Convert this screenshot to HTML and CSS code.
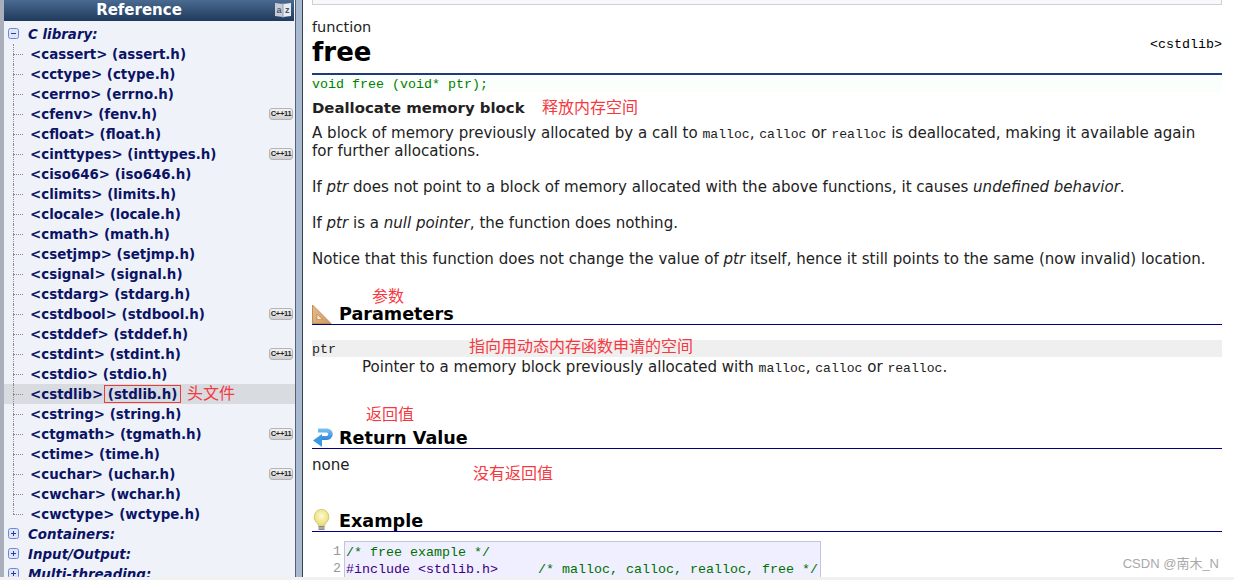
FILE: index.html
```html
<!DOCTYPE html>
<html lang="en">
<head>
  <meta charset="UTF-8">
  <title>free - C++ Reference</title>
  <link rel="stylesheet" href="styles.css">
</head>
<body>
  <div class="page">
    <aside class="sidebar">
      <div class="side-title">
        <span>Reference</span>
        <svg class="az-icon" width="16" height="16" viewBox="0 0 16 16">
          <path d="M0 1l8 1v13l-8-1z" fill="#c6ccd6"/>
          <path d="M16 1l-8 1v13l8-1z" fill="#e9ecf0"/>
          <path d="M8 1v15" stroke="#8f9cb0" stroke-width="1"/>
          <text x="1.500" y="11" class="az-text">a</text>
          <text x="10" y="11" class="az-text">z</text>
        </svg>
      </div>
      <ul class="tree tree-first">
        <li class="group"><svg class="toggle" viewBox="0 0 11 11"><rect x=".5" y=".5" width="10" height="10" rx="2" fill="#dfe6fb" stroke="#6f86d8"/><path d="M3 5.500h5" stroke="#2a3f9a"/></svg><em>C library:</em></li>
      </ul>
      <ul class="tree headers">
        <li>&lt;cassert&gt; (assert.h)</li>
        <li>&lt;cctype&gt; (ctype.h)</li>
        <li>&lt;cerrno&gt; (errno.h)</li>
        <li>&lt;cfenv&gt; (fenv.h)<span class="badge">C++11</span></li>
        <li>&lt;cfloat&gt; (float.h)</li>
        <li>&lt;cinttypes&gt; (inttypes.h)<span class="badge">C++11</span></li>
        <li>&lt;ciso646&gt; (iso646.h)</li>
        <li>&lt;climits&gt; (limits.h)</li>
        <li>&lt;clocale&gt; (locale.h)</li>
        <li>&lt;cmath&gt; (math.h)</li>
        <li>&lt;csetjmp&gt; (setjmp.h)</li>
        <li>&lt;csignal&gt; (signal.h)</li>
        <li>&lt;cstdarg&gt; (stdarg.h)</li>
        <li>&lt;cstdbool&gt; (stdbool.h)<span class="badge">C++11</span></li>
        <li>&lt;cstddef&gt; (stddef.h)</li>
        <li>&lt;cstdint&gt; (stdint.h)<span class="badge">C++11</span></li>
        <li>&lt;cstdio&gt; (stdio.h)</li>
        <li class="current">&lt;cstdlib&gt; <span class="boxed">(stdlib.h)</span><span class="note note-header">头文件</span></li>
        <li>&lt;cstring&gt; (string.h)</li>
        <li>&lt;ctgmath&gt; (tgmath.h)<span class="badge">C++11</span></li>
        <li>&lt;ctime&gt; (time.h)</li>
        <li>&lt;cuchar&gt; (uchar.h)<span class="badge">C++11</span></li>
        <li>&lt;cwchar&gt; (wchar.h)</li>
        <li>&lt;cwctype&gt; (wctype.h)</li>
      </ul>
      <ul class="tree">
        <li class="group"><svg class="toggle" viewBox="0 0 11 11"><rect x=".5" y=".5" width="10" height="10" rx="2" fill="#dfe6fb" stroke="#6f86d8"/><path d="M3 5.500h5M5.500 3v5" stroke="#2a3f9a"/></svg><em>Containers:</em></li>
        <li class="group"><svg class="toggle" viewBox="0 0 11 11"><rect x=".5" y=".5" width="10" height="10" rx="2" fill="#dfe6fb" stroke="#6f86d8"/><path d="M3 5.500h5M5.500 3v5" stroke="#2a3f9a"/></svg><em>Input/Output:</em></li>
        <li class="group"><svg class="toggle" viewBox="0 0 11 11"><rect x=".5" y=".5" width="10" height="10" rx="2" fill="#dfe6fb" stroke="#6f86d8"/><path d="M3 5.500h5M5.500 3v5" stroke="#2a3f9a"/></svg><em>Multi-threading:</em></li>
      </ul>
    </aside>

    <main class="content">
      <div class="top-box"></div>
      <div class="kind">function</div>
      <div class="title-row">
        <h1>free</h1>
        <span class="header-name">&lt;cstdlib&gt;</span>
      </div>
      <div class="proto">void free (void* ptr);</div>
      <div class="summary">Deallocate memory block<span class="note note-title">释放内存空间</span></div>
      <p>A block of memory previously allocated by a call to <code>malloc</code>, <code>calloc</code> or <code>realloc</code> is deallocated, making it available again<br>for further allocations.</p>
      <p>If <i>ptr</i> does not point to a block of memory allocated with the above functions, it causes <i>undefined behavior</i>.</p>
      <p>If <i>ptr</i> is a <i>null pointer</i>, the function does nothing.</p>
      <p>Notice that this function does not change the value of <i>ptr</i> itself, hence it still points to the same (now invalid) location.</p>

      <h3 class="section section-params">
        <svg class="sec-icon" width="24" height="20" viewBox="0 0 24 20">
          <defs>
            <linearGradient id="ruler" x1="0" y1="0" x2="1" y2="1">
              <stop offset="0" stop-color="#e8bd8c"/>
              <stop offset="1" stop-color="#cf9a62"/>
            </linearGradient>
          </defs>
          <path d="M0.500 1l18.500 18.500H0.500z" fill="url(#ruler)" stroke="#c08d58"/>
          <path d="M5 10l5.500 5.500H5z" fill="#f6e9d8" stroke="#b98044" stroke-width=".6"/>
        </svg>
        Parameters<span class="note note-params">参数</span>
      </h3>
      <div class="param-name">ptr<span class="note note-ptr">指向用动态内存函数申请的空间</span></div>
      <div class="param-desc">Pointer to a memory block previously allocated with <code>malloc</code>, <code>calloc</code> or <code>realloc</code>.</div>

      <h3 class="section section-return">
        <svg class="sec-icon" width="24" height="20" viewBox="0 0 24 20">
          <defs>
            <linearGradient id="arrow" x1="0" y1="0" x2="0" y2="1">
              <stop offset="0" stop-color="#7cc4f2"/>
              <stop offset="1" stop-color="#2f86d6"/>
            </linearGradient>
          </defs>
          <path d="M6 0.500h9a5.500 5.500 0 0 1 0 11.500H10v-4h4.500a1.600 1.600 0 0 0 0-3.500H6z" fill="url(#arrow)"/>
          <path d="M10 6v13L1 12.500z" fill="#3d97e2"/>
        </svg>
        Return Value<span class="note note-return">返回值</span>
      </h3>
      <p class="none">none<span class="note note-none">没有返回值</span></p>

      <h3 class="section section-example">
        <svg class="sec-icon" width="24" height="22" viewBox="0 0 24 22">
          <defs>
            <radialGradient id="bulb" cx=".5" cy=".4" r=".6">
              <stop offset="0" stop-color="#fdfbd0"/>
              <stop offset="1" stop-color="#e8d96e"/>
            </radialGradient>
          </defs>
          <path d="M9.500 0.500a7.500 7.500 0 0 0-5 13c1 1.200 1.800 2 2 3.500h6c.2-1.500 1-2.300 2-3.500a7.500 7.500 0 0 0-5-13z" fill="url(#bulb)" stroke="#d8ca78"/>
          <path d="M6.500 17h6v4h-6z" fill="#8b8b85"/>
          <path d="M6.500 19h6" stroke="#c9c9c2"/>
        </svg>
        Example
      </h3>
      <div class="code-wrap">
        <div class="line-nums">1<br>2</div>
        <pre class="code"><span class="cmt">/* free example */</span>
<span class="pp">#include &lt;stdlib.h&gt;</span>     <span class="cmt">/* malloc, calloc, realloc, free */</span></pre>
      </div>
    </main>
  </div>
  <div class="watermark">CSDN @南木_N</div>
  <div class="bottom-strip"></div>
</body>
</html>
```
FILE: styles.css
```css
* {
  box-sizing: border-box;
}
html, body {
  margin: 0;
  height: 580px;
  overflow: hidden;
  background: #fff;
}
body {
  position: relative;
  font-family: "DejaVu Sans", Verdana, sans-serif;
  font-size: 15.05px;
  color: #222;
}
.page {
  display: flex;
  height: 580px;
}

/* left menu */
.sidebar {
  width: 303px;
  flex: none;
  height: 580px;
  overflow: hidden;
  background: linear-gradient(to right, #eff3f9 291px, #59606b 291px, #59606b 292px, #a9bbd2 292px);
  border-left: 4px solid #a9b0bb;
  border-right: 1px solid #3a404a;
  color: #0c1366;
}
.side-title {
  position: relative;
  width: 290px;
  height: 21px;
  background: linear-gradient(#4a6a90, #1f3a5c);
  color: #fff;
  font-weight: bold;
  font-size: 15px;
  line-height: 20px;
  text-align: center;
  padding-right: 20px;
}
.az-icon {
  position: absolute;
  right: 3px;
  top: 2px;
}
.az-text {
  font-family: "Liberation Sans", sans-serif;
  font-size: 9px;
  fill: #47566e;
}
.tree {
  list-style: none;
  width: 291px;
  margin: 0;
  padding: 0;
  font-weight: bold;
  font-size: 13.4px;
}
.tree-first {
  margin-top: 3px;
}
.tree li {
  position: relative;
  height: 20px;
  line-height: 22px;
  white-space: nowrap;
}
.headers li {
  padding-left: 26px;
}
.headers li::before {
  content: "";
  position: absolute;
  left: 9px;
  top: 10px;
  width: 10px;
  border-top: 1px dotted #8a8a8a;
}
.headers li::after {
  content: "";
  position: absolute;
  left: 9px;
  top: 0;
  height: 20px;
  border-left: 1px dotted #8a8a8a;
}
.headers li:last-child::after {
  height: 10px;
}
.group {
  padding-left: 24px;
}
.toggle {
  position: absolute;
  left: 4px;
  top: 4px;
  width: 11px;
  height: 11px;
}
.badge {
  position: absolute;
  right: 2px;
  top: 4px;
  width: 24px;
  height: 12px;
  background: linear-gradient(#f2f2f2, #cfcfcf);
  border: 1px solid #b4b4b4;
  border-radius: 3px;
  color: #222;
  font-family: "Liberation Sans", sans-serif;
  font-size: 7.5px;
  letter-spacing: -0.3px;
  line-height: 10px;
  text-align: center;
}
.current {
  background: #d8dbe0;
}
.boxed {
  display: inline-block;
  height: 18px;
  line-height: 18px;
  border: 1px solid #f03a3a;
  padding: 0 3px;
  margin-left: -4px;
}

/* main content */
.content {
  flex: 1;
  padding: 0 12px 0 9px;
  min-width: 0;
}
.top-box {
  height: 5px;
  background: #f7f7fc;
  border: 1px solid #cfd0d6;
  border-top: none;
}
.kind {
  margin-top: 13px;
  font-size: 14.5px;
  line-height: 18px;
}
.title-row {
  display: flex;
  justify-content: space-between;
  align-items: flex-end;
  border-bottom: 2px solid #1f3b7f;
  height: 39px;
  padding-bottom: 6px;
  color: #000;
}
h1 {
  margin: 0;
  font-size: 26px;
  line-height: 30px;
}
.header-name {
  font-family: "Liberation Mono", monospace;
  font-size: 13.33px;
  line-height: 16px;
  padding-bottom: 14px;
}
.proto {
  height: 17px;
  background: #fbfffb;
  color: #008000;
  font-family: "Liberation Mono", monospace;
  font-size: 13.33px;
  line-height: 19px;
}
.summary {
  position: relative;
  margin-top: 7px;
  font-weight: bold;
  font-size: 14.9px;
  line-height: 18px;
  color: #222;
}
p {
  margin: 7px 0 18px;
  line-height: 18px;
}
code {
  font-family: "Liberation Mono", monospace;
  font-size: 13.1px;
  line-height: 1;
}
.section {
  position: relative;
  display: flex;
  align-items: flex-end;
  margin: 0;
  height: 24px;
  font-size: 17.6px;
  line-height: 20px;
  color: #000;
  border-bottom: 1px solid #000080;
}
.sec-icon {
  flex: none;
  margin-right: 3px;
}
.section-params {
  margin-top: 33px;
}
.param-name {
  position: relative;
  margin-top: 15px;
  height: 17px;
  background: #efefef;
  font-family: "Liberation Mono", monospace;
  font-size: 13.33px;
  line-height: 20px;
}
.param-desc {
  margin-top: 1px;
  padding-left: 50px;
  line-height: 18px;
}
.section-return {
  margin-top: 49px;
}
.none {
  position: relative;
  margin: 7px 0 0;
}
.section-example {
  margin-top: 34px;
}
.code-wrap {
  display: flex;
  margin-top: 9px;
}
.line-nums {
  width: 32px;
  text-align: right;
  padding-right: 3px;
  color: #999;
  font-family: "Liberation Mono", monospace;
  font-size: 13.33px;
  line-height: 17px;
  padding-top: 2px;
}
.code {
  margin: 0;
  width: 477px;
  height: 60px;
  padding: 2px 1px;
  background: #efefff;
  border: 1px solid #c4c4d8;
  font-family: "Liberation Mono", monospace;
  font-size: 13.33px;
  line-height: 17px;
}
.cmt {
  color: #007000;
}
.pp {
  color: #400080;
}

/* red notes pasted over the screenshot */
.note {
  position: absolute;
  font-family: "Noto Sans CJK SC", sans-serif;
  font-weight: normal;
  font-style: normal;
  font-size: 16px;
  line-height: 20px;
  color: #f5393f;
  white-space: nowrap;
}
.note-header { left: 183px; top: -2px; }
.note-title { left: 230px; top: -3px; }
.note-params { left: 60px; top: -16px; }
.note-ptr { left: 157px; top: -5px; }
.note-return { left: 54px; top: -22px; }
.note-none { left: 161px; top: 6px; }

.watermark {
  position: absolute;
  right: 15px;
  bottom: 8px;
  font-family: "Liberation Sans", "Noto Sans CJK SC", sans-serif;
  font-size: 13px;
  line-height: 16px;
  color: #a9a9a9;
}
.bottom-strip {
  position: absolute;
  left: 0;
  right: 0;
  bottom: 0;
  height: 3px;
  background: #f1f1f1;
}
```
